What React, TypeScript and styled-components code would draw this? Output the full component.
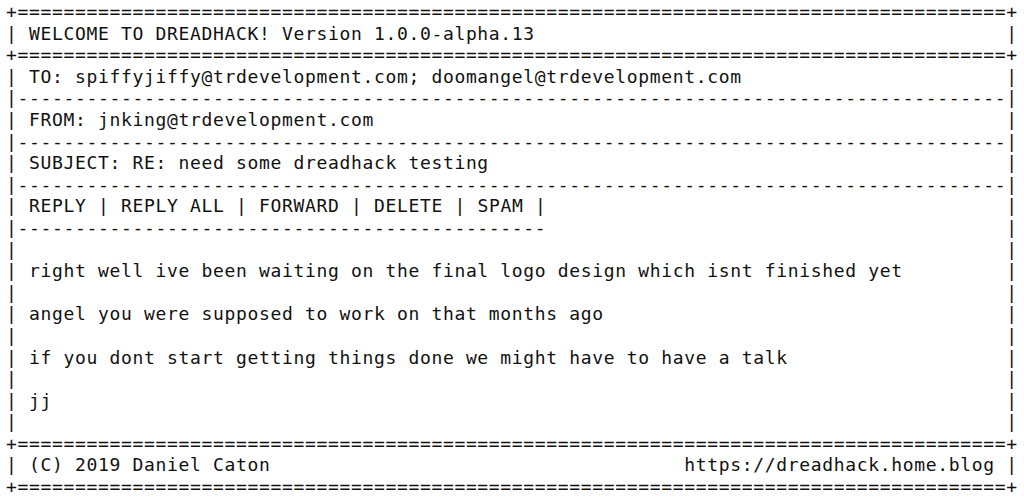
import React from "react";
import styled, { createGlobalStyle } from "styled-components";

const WIDTH = 88;
const INNER = WIDTH - 2;

const Global = createGlobalStyle`
  html, body { margin: 0; padding: 0; background: #ffffff; }
`;

const Screen = styled.div`
  padding: 1px 0 0 6px;
  font-family: "DejaVu Sans Mono", "Liberation Mono", monospace;
  font-size: 18px;
  letter-spacing: 0.66px;
  line-height: 21.6px;
  color: #111111;
  white-space: pre;
`;

const Line = styled.div`
  height: 21.6px;
`;

const Action = styled.span`
  color: #111111;
  cursor: pointer;
`;

const spaces = (n: number) => " ".repeat(Math.max(0, n));

const DoubleRule = () => <Line>{"+" + "=".repeat(INNER) + "+"}</Line>;

const Divider = ({ len = INNER, closed = true }: { len?: number; closed?: boolean }) => (
  <Line>{"|" + "-".repeat(len) + (closed ? spaces(INNER - len) + "|" : "")}</Line>
);

const Row = ({ left = "", right = "" }: { left?: string; right?: string }) => {
  const gap = INNER - 2 - left.length - right.length;
  return <Line>{"| " + left + spaces(gap) + right + " |"}</Line>;
};

const actions = ["REPLY", "REPLY ALL", "FORWARD", "DELETE", "SPAM"];

const ActionRow = () => {
  const text = actions.join(" | ") + " |";
  return (
    <Line>
      {"| "}
      {actions.map((a, i) => (
        <React.Fragment key={a}>
          <Action>{a}</Action>
          {i < actions.length - 1 ? " | " : " |"}
        </React.Fragment>
      ))}
      {spaces(INNER - 1 - text.length) + "|"}
    </Line>
  );
};

const body = [
  "right well ive been waiting on the final logo design which isnt finished yet",
  "angel you were supposed to work on that months ago",
  "if you dont start getting things done we might have to have a talk",
  "jj",
];

export default function App() {
  return (
    <>
      <Global />
      <Screen>
        <DoubleRule />
        <Row left="WELCOME TO DREADHACK! Version 1.0.0-alpha.13" />
        <DoubleRule />
        <Row left="TO: spiffyjiffy@trdevelopment.com; doomangel@trdevelopment.com" />
        <Divider />
        <Row left="FROM: jnking@trdevelopment.com" />
        <Divider />
        <Row left="SUBJECT: RE: need some dreadhack testing" />
        <Divider />
        <ActionRow />
        <Divider len={46} />
        {body.map((b) => (
          <React.Fragment key={b}>
            <Row />
            <Row left={b} />
          </React.Fragment>
        ))}
        <Row />
        <DoubleRule />
        <Row left="(C) 2019 Daniel Caton" right="https://dreadhack.home.blog" />
        <DoubleRule />
      </Screen>
    </>
  );
}
